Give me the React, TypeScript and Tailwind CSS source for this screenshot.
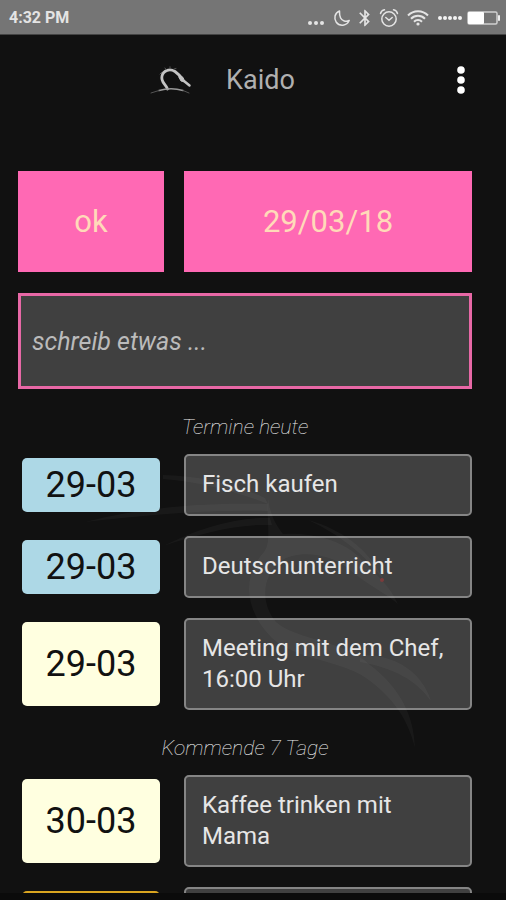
import { useState } from "react";
import { MdBluetooth } from "react-icons/md";

interface Entry {
  id: string;
  date: string;
  text: string;
  color: string;
}

interface Section {
  title: string;
  entries: Entry[];
}

const sections: Section[] = [
  {
    title: "Termine heute",
    entries: [
      { id: "1", date: "29-03", text: "Fisch kaufen", color: "bg-[#add8e6]" },
      { id: "2", date: "29-03", text: "Deutschunterricht", color: "bg-[#add8e6]" },
      { id: "3", date: "29-03", text: "Meeting mit dem Chef, 16:00 Uhr", color: "bg-[#ffffe0]" },
    ],
  },
  {
    title: "Kommende 7 Tage",
    entries: [
      { id: "4", date: "30-03", text: "Kaffee trinken mit Mama", color: "bg-[#ffffe0]" },
      { id: "5", date: "", text: "", color: "bg-[#daa520]" },
    ],
  },
];

function StatusBar() {
  return (
    <div className="flex h-[35px] shrink-0 items-center justify-between border-b border-[#444] bg-[#757575] pl-[9px] pr-1.5 pt-0.5 text-[#e4e4e4]">
      <span className="text-base font-bold">4:32 PM</span>
      <div className="flex items-center">
        <svg viewBox="0 0 18 20" className="mr-2 h-5 w-[18px]" fill="currentColor">
          <circle cx="3" cy="15" r="2" />
          <circle cx="9" cy="15" r="2" />
          <circle cx="15" cy="15" r="2" />
        </svg>
        <svg viewBox="0 0 18 18" className="mr-1 h-[18px] w-[18px]" fill="none" stroke="currentColor" strokeWidth="1.5" strokeLinejoin="round">
          <path d="M6.5 2C1.5 4 .7 9.500 3.300 13.300C6.500 17.700 13.700 17.200 16.200 11.500C13 13 9 12 7.600 9C6.600 6.800 6.400 4.500 6.500 2Z" />
        </svg>
        <MdBluetooth className="mr-1 size-5" />
        <svg viewBox="0 0 20 20" className="mr-2 size-5" fill="none" stroke="currentColor" strokeWidth="1.5" strokeLinecap="round">
          <circle cx="10" cy="11" r="7.200" />
          <path d="M1.500 5.500C2 3.500 3.500 2.200 5.500 1.800M18.500 5.500C18 3.500 16.500 2.200 14.500 1.800M6.800 9.500L10 12.200L13.200 9.500" />
        </svg>
        <svg viewBox="0 0 22 18" className="mr-2 h-[18px] w-[22px]" fill="none" stroke="currentColor" strokeWidth="2">
          <path d="M1 6.500C6.500 .8 15.500 .8 21 6.500M4 9.700C8 5.700 14 5.700 18 9.700M7 12.800C9.300 10.500 12.700 10.500 15 12.800" />
          <circle cx="11" cy="15" r="1.600" fill="currentColor" stroke="none" />
        </svg>
        <svg viewBox="0 0 26 6" className="mr-1 h-[6px] w-[26px]" fill="#f4f4f4">
          <circle cx="3" cy="3" r="2" />
          <circle cx="8" cy="3" r="2" />
          <circle cx="13" cy="3" r="2" />
          <circle cx="18" cy="3" r="2" />
          <circle cx="23" cy="3" r="2" />
        </svg>
        <svg viewBox="0 0 33 14" className="h-[14px] w-[33px]">
          <rect x="1" y="1" width="29" height="12" rx="1.500" fill="none" stroke="#d0d0d0" strokeWidth="1.500" />
          <rect x="1" y="1" width="16" height="12" rx="1" fill="#fff" />
          <rect x="31" y="4" width="2" height="6" rx="1" fill="#eee" />
        </svg>
      </div>
    </div>
  );
}

function CraneLogo() {
  return (
    <svg viewBox="0 0 44 30" className="h-[30px] w-11" fill="none" stroke="#c4c4c4" strokeLinecap="round">
      <path d="M17.500 24C15.500 19 10.500 17 12 11C13.500 5 20 3.500 25 6.500C28 8.500 30 11 32 14" strokeWidth="2.800" />
      <path d="M29 12.500L31 16L35 17L33 12.500L30 10Z" fill="#c4c4c4" strokeWidth="1" />
      <path d="M34 16L39.500 20.500" strokeWidth="2.500" />
      <path d="M12 7L10 9M16 4.500L15 3M20 3.500V1.800M24 4L26 3.500" strokeWidth="1" stroke="#555" />
      <path d="M9 25.500C16 23.500 26 23.500 33 25.500" strokeWidth="1.500" stroke="#999" />
      <path d="M1 28L9 25.500M33 25.500L39 28" strokeWidth="1" stroke="#555" />
    </svg>
  );
}

// faint crane that shines through the list
function CraneWatermark() {
  return (
    <svg viewBox="80 460 360 300" className="pointer-events-none absolute left-[62px] top-[71px] h-[300px] w-[360px]">
      <g fill="#fff" fillOpacity=".035">
        <path d="M163 475C200 476 235 484 265 498L268 504C235 491 200 482 163 479Z" />
        <path d="M85 522C140 508 200 502 268 504L268 511C200 509 140 516 85 522Z" />
        <path d="M163 546C200 528 235 517 270 518L272 525C235 524 200 534 163 546Z" />
        <path d="M268 498C270 515 276 525 283 534C305 532 340 538 358 556C372 572 388 582 398 604C384 592 366 584 350 570C330 552 296 550 281 561C262 576 260 602 276 622C296 640 344 640 370 665C400 688 414 715 415 748C408 720 394 698 366 678C340 660 296 660 272 638C244 610 242 576 264 552C272 542 266 522 268 498Z" />
        <path d="M308 520C345 530 370 552 384 580C364 554 342 536 308 520Z" />
        <path d="M360 655C395 654 422 672 431 701C416 680 394 668 360 662Z" />
      </g>
      <circle cx="382" cy="580" r="2" fill="#8b3a3a" fillOpacity=".8" />
    </svg>
  );
}

function EntryRow({ entry }: { entry: Entry }) {
  return (
    <li className="grid grid-cols-[146px_1fr] gap-5">
      <div className={`m-1 flex items-center justify-center rounded-[5px] text-4xl text-[#111] ${entry.color}`}>
        {entry.date}
      </div>
      <div className="min-h-[62px] rounded-[5px] border-2 border-[#858585] bg-[#404040] px-4 py-[13px] text-2xl leading-[31px] text-[#e6e6e6]">
        {entry.text}
      </div>
    </li>
  );
}

export default function App() {
  const [note, setNote] = useState("");

  return (
    <div className="flex h-screen flex-col overflow-hidden bg-[#111] font-[Roboto,sans-serif]">
      <StatusBar />
      <header className="flex h-[90px] shrink-0 items-center justify-between pl-[18px] pr-[29px]">
        <span className="w-8" />
        <div className="flex items-center gap-8 pr-[50px]">
          <CraneLogo />
          <h1 className="text-[27px] leading-8 text-[#b0b0b0]">Kaido</h1>
        </div>
        <button type="button" aria-label="Menu" className="flex h-10 w-8 items-center justify-center">
          <svg viewBox="0 0 8 28" className="h-7 w-2" fill="#fff">
            <circle cx="4" cy="4" r="3.800" />
            <circle cx="4" cy="14" r="3.800" />
            <circle cx="4" cy="24" r="3.800" />
          </svg>
        </button>
      </header>
      <main className="min-h-0 flex-1 overflow-hidden pl-[18px] pr-[34px] pt-[46px]">
        <div className="grid grid-cols-[146px_1fr] gap-5 text-[31px] text-[#ffdab9]">
          <button type="button" className="h-[101px] bg-[#ff69b4] pt-0.5">ok</button>
          <button type="button" className="h-[101px] bg-[#ff69b4] pt-0.5">29/03/18</button>
        </div>
        <input
          type="text"
          aria-label="schreib etwas"
          placeholder="schreib etwas ..."
          value={note}
          onChange={(e) => setNote(e.target.value)}
          className="mt-[21px] h-24 w-full border-3 border-[#e868a6] bg-[#404040] px-[11px] text-[25px] italic text-white outline-none placeholder:text-[#bbb]"
        />
        <div className="relative">
          {sections.map((section) => (
            <section key={section.title}>
              <h2 className="flex h-[65px] items-center justify-center pt-3 text-[21px] font-thin italic text-[#eee]">
                {section.title}
              </h2>
              <ul className="flex flex-col gap-5">
                {section.entries.map((entry) => (
                  <EntryRow key={entry.id} entry={entry} />
                ))}
              </ul>
            </section>
          ))}
          <CraneWatermark />
        </div>
      </main>
      <div className="h-[7px] shrink-0 bg-[#0b0b0b]" />
    </div>
  );
}
